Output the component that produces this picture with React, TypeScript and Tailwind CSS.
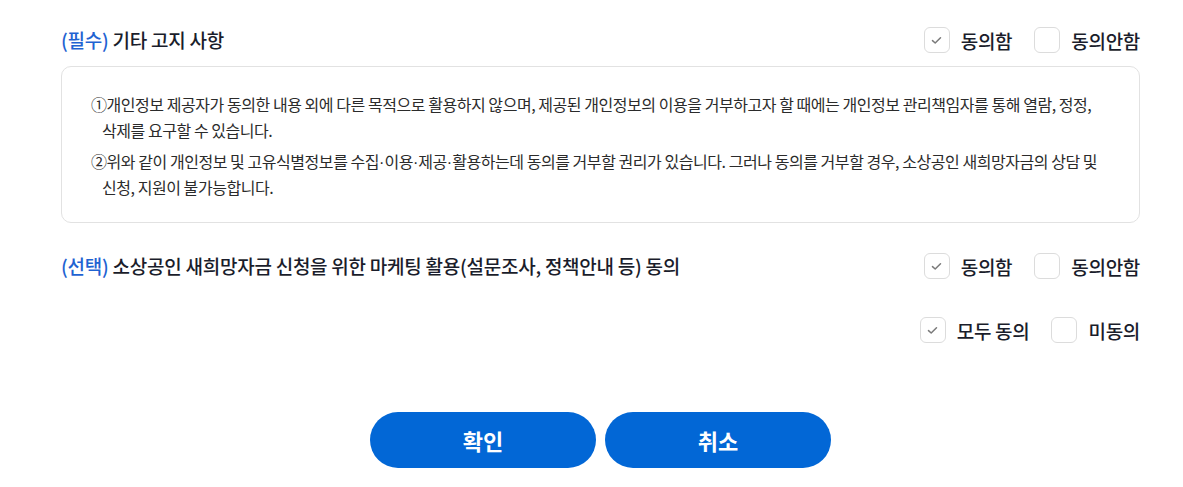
import React from "react";

function Check({ checked }: { checked?: boolean }) {
  return (
    <span className="flex h-[26px] w-[26px] items-center justify-center rounded-[6px] border border-[#dcdcdc] bg-white">
      {checked && (
        <svg width="11" height="9" viewBox="0 0 11 9" fill="none">
          <path d="M1.5 4.6 L4.2 7 L9.5 1.8" stroke="#7a7a7a" strokeWidth="1.5" strokeLinecap="round" strokeLinejoin="round" />
        </svg>
      )}
    </span>
  );
}

function Opt({ label, checked }: { label: string; checked?: boolean }) {
  return (
    <label className="flex items-center gap-[11px]">
      <Check checked={checked} />
      <span className="text-[19px] font-medium tracking-[-0.3px] text-[#1a1d2b] leading-none">{label}</span>
    </label>
  );
}

function Dot() {
  return <span className="font-['Liberation_Sans',sans-serif] leading-[0] tracking-normal">·</span>;
}

export default function App() {
  return (
    <div className="h-[487px] w-[1183px] bg-white pl-[61px] pr-[43px] pt-[27px] font-['Noto_Sans_CJK_KR',sans-serif]">
      <div className="flex h-[26px] items-center justify-between">
        <h3 className="text-[19px] font-medium tracking-[-0.25px] text-[#1a1d2b]">
          <span className="text-[#1f63d2]">(필수)</span> 기타 고지 사항
        </h3>
        <div className="flex items-center gap-[22px]">
          <Opt label="동의함" checked />
          <Opt label="동의안함" />
        </div>
      </div>

      <div className="mt-[13px] h-[157px] rounded-[10px] border border-[#e2e2e2] pl-[29px] pt-[24px] text-[16px] leading-[26px] tracking-[-0.45px] text-[#2b2b2b]">
        <p className="whitespace-nowrap">
          ①개인정보 제공자가 동의한 내용 외에 다른 목적으로 활용하지 않으며, 제공된 개인정보의 이용을 거부하고자 할 때에는 개인정보 관리책임자를 통해 열람, 정정,
          <br />
          <span className="pl-[11px]">삭제를 요구할 수 있습니다.</span>
        </p>
        <p className="mt-[5px] whitespace-nowrap">
          ②위와 같이 개인정보 및 고유식별정보를 수집<Dot />이용<Dot />제공<Dot />활용하는데 동의를 거부할 권리가 있습니다. 그러나 동의를 거부할 경우, 소상공인 새희망자금의 상담 및
          <br />
          <span className="pl-[11px]">신청, 지원이 불가능합니다.</span>
        </p>
      </div>

      <div className="mt-[30px] flex h-[26px] items-center justify-between">
        <h3 className="text-[19px] font-medium tracking-[-0.25px] text-[#1a1d2b]">
          <span className="text-[#1f63d2]">(선택)</span> 소상공인 새희망자금 신청을 위한 마케팅 활용(설문조사, 정책안내 등) 동의
        </h3>
        <div className="flex items-center gap-[22px]">
          <Opt label="동의함" checked />
          <Opt label="동의안함" />
        </div>
      </div>

      <div className="mt-[38px] flex h-[26px] items-center justify-end">
        <div className="flex items-center gap-[22px]">
          <Opt label="모두 동의" checked />
          <Opt label="미동의" />
        </div>
      </div>

      <div className="mt-[69px] flex justify-center gap-[9px]">
        <button className="h-[56px] w-[226px] rounded-full bg-[#0267d6] text-[22px] font-bold text-white">확인</button>
        <button className="h-[56px] w-[226px] rounded-full bg-[#0267d6] text-[22px] font-bold text-white">취소</button>
      </div>
    </div>
  );
}
